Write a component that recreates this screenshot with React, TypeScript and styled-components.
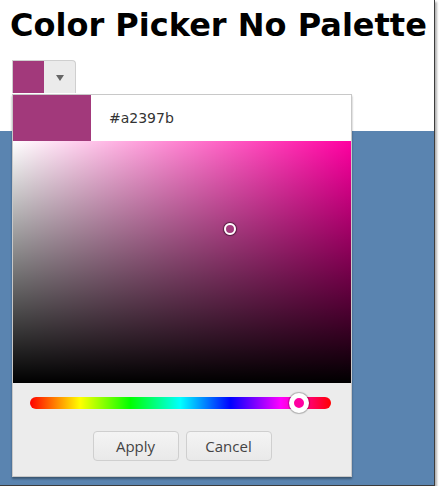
import styled, { createGlobalStyle } from 'styled-components';

const HUE = 322;
const SAT = 0.643;
const VAL = 0.635;
const SELECTED = '#a2397b';

const GlobalStyle = createGlobalStyle`
  body {
    margin: 0;
    background: #ffffff;
    font-family: 'DejaVu Sans', Verdana, sans-serif;
  }
`;

const Frame = styled.div`
  position: relative;
  width: 434px;
  height: 485px;
  display: flex;
  flex-direction: column;
  border-right: 1px solid #3c3c3c;
  border-bottom: 1px solid #3c3c3c;
  box-shadow: 2px 2px 2px rgba(0, 0, 0, 0.3);
`;

const Header = styled.header`
  height: 131px;
  background: #ffffff;
  padding-top: 7px;
  box-sizing: border-box;
`;

const Title = styled.h1`
  margin: 0 0 16px 10px;
  font-family: 'DejaVu Sans', Verdana, sans-serif;
  font-weight: 700;
  font-size: 32px;
  line-height: 37px;
  color: #000000;
  white-space: nowrap;
`;

const DropButton = styled.div`
  margin-left: 12px;
  width: 64px;
  height: 33px;
  display: flex;
  border: 1px solid #cfcfcf;
  border-bottom: none;
  border-radius: 0 4px 0 0;
  background: #ebebeb;
  box-sizing: border-box;
`;

const ButtonSwatch = styled.div<{ color: string }>`
  width: 31px;
  background: ${(p) => p.color};
`;

const Arrow = styled.div`
  flex: 1;
  display: flex;
  align-items: center;
  justify-content: center;
  padding-top: 2px;
  &::after {
    content: '';
    border-left: 4px solid transparent;
    border-right: 4px solid transparent;
    border-top: 6px solid #666666;
  }
`;

const Backdrop = styled.main`
  flex: 1;
  background: #5a84b0;
`;

const Popup = styled.div`
  position: absolute;
  left: 12px;
  top: 94px;
  width: 338px;
  border: 1px solid #c8c8c8;
  background: #ececec;
  box-shadow: 0 2px 2px rgba(0, 0, 0, 0.35);
  padding-bottom: 15px;
`;

const ValueRow = styled.div`
  display: flex;
  align-items: center;
  height: 46px;
  background: #ffffff;
`;

const BigSwatch = styled.div<{ color: string }>`
  width: 78px;
  height: 100%;
  background: ${(p) => p.color};
`;

const HexText = styled.span`
  padding-left: 18px;
  font-size: 14px;
  color: #333333;
`;

const SatValArea = styled.div<{ hue: number }>`
  position: relative;
  height: 242px;
  background:
    linear-gradient(to bottom, rgba(0, 0, 0, 0), #000000),
    linear-gradient(to right, #ffffff, rgba(255, 255, 255, 0)),
    hsl(${(p) => p.hue}, 100%, 50%);
`;

const Marker = styled.div`
  position: absolute;
  width: 8px;
  height: 8px;
  margin: -6px 0 0 -6px;
  border: 2px solid #ffffff;
  border-radius: 50%;
  box-shadow: 0 0 1px 1px rgba(0, 0, 0, 0.5);
`;

const HueRow = styled.div`
  height: 20px;
  margin: 10px 0 0 17px;
  display: flex;
  align-items: center;
`;

const HueTrack = styled.div`
  position: relative;
  width: 301px;
  height: 12px;
  border-radius: 6px;
  background: linear-gradient(
    to right,
    #ff0000,
    #ffff00,
    #00ff00,
    #00ffff,
    #0000ff,
    #ff00ff,
    #ff0000
  );
`;

const HueThumb = styled.div<{ hue: number }>`
  position: absolute;
  top: 50%;
  width: 10px;
  height: 10px;
  margin: -10px 0 0 -10px;
  border: 5px solid #ffffff;
  border-radius: 50%;
  background: hsl(${(p) => p.hue}, 100%, 50%);
  box-shadow: 0 0 1px 1px rgba(0, 0, 0, 0.25);
`;

const Actions = styled.div`
  display: flex;
  justify-content: center;
  gap: 7px;
  margin-top: 18px;
`;

const Button = styled.button`
  width: 86px;
  height: 30px;
  border: 1px solid #cfcfcf;
  border-radius: 4px;
  background: linear-gradient(#f4f4f4, #e9e9e9);
  font-family: 'Open Sans', 'DejaVu Sans', sans-serif;
  font-size: 15px;
  color: #444444;
  padding: 0;
`;

function App() {
  return (
    <>
      <GlobalStyle />
      <Frame>
        <Header>
          <Title>Color Picker No Palette</Title>
          <DropButton>
            <ButtonSwatch color={SELECTED} />
            <Arrow />
          </DropButton>
        </Header>
        <Backdrop />
        <Popup>
          <ValueRow>
            <BigSwatch color={SELECTED} />
            <HexText>{SELECTED}</HexText>
          </ValueRow>
          <SatValArea hue={HUE}>
            <Marker style={{ left: `${SAT * 100}%`, top: `${(1 - VAL) * 100}%` }} />
          </SatValArea>
          <HueRow>
            <HueTrack>
              <HueThumb hue={HUE} style={{ left: `${(HUE / 360) * 100}%` }} />
            </HueTrack>
          </HueRow>
          <Actions>
            <Button>Apply</Button>
            <Button>Cancel</Button>
          </Actions>
        </Popup>
      </Frame>
    </>
  );
}

export default App;
